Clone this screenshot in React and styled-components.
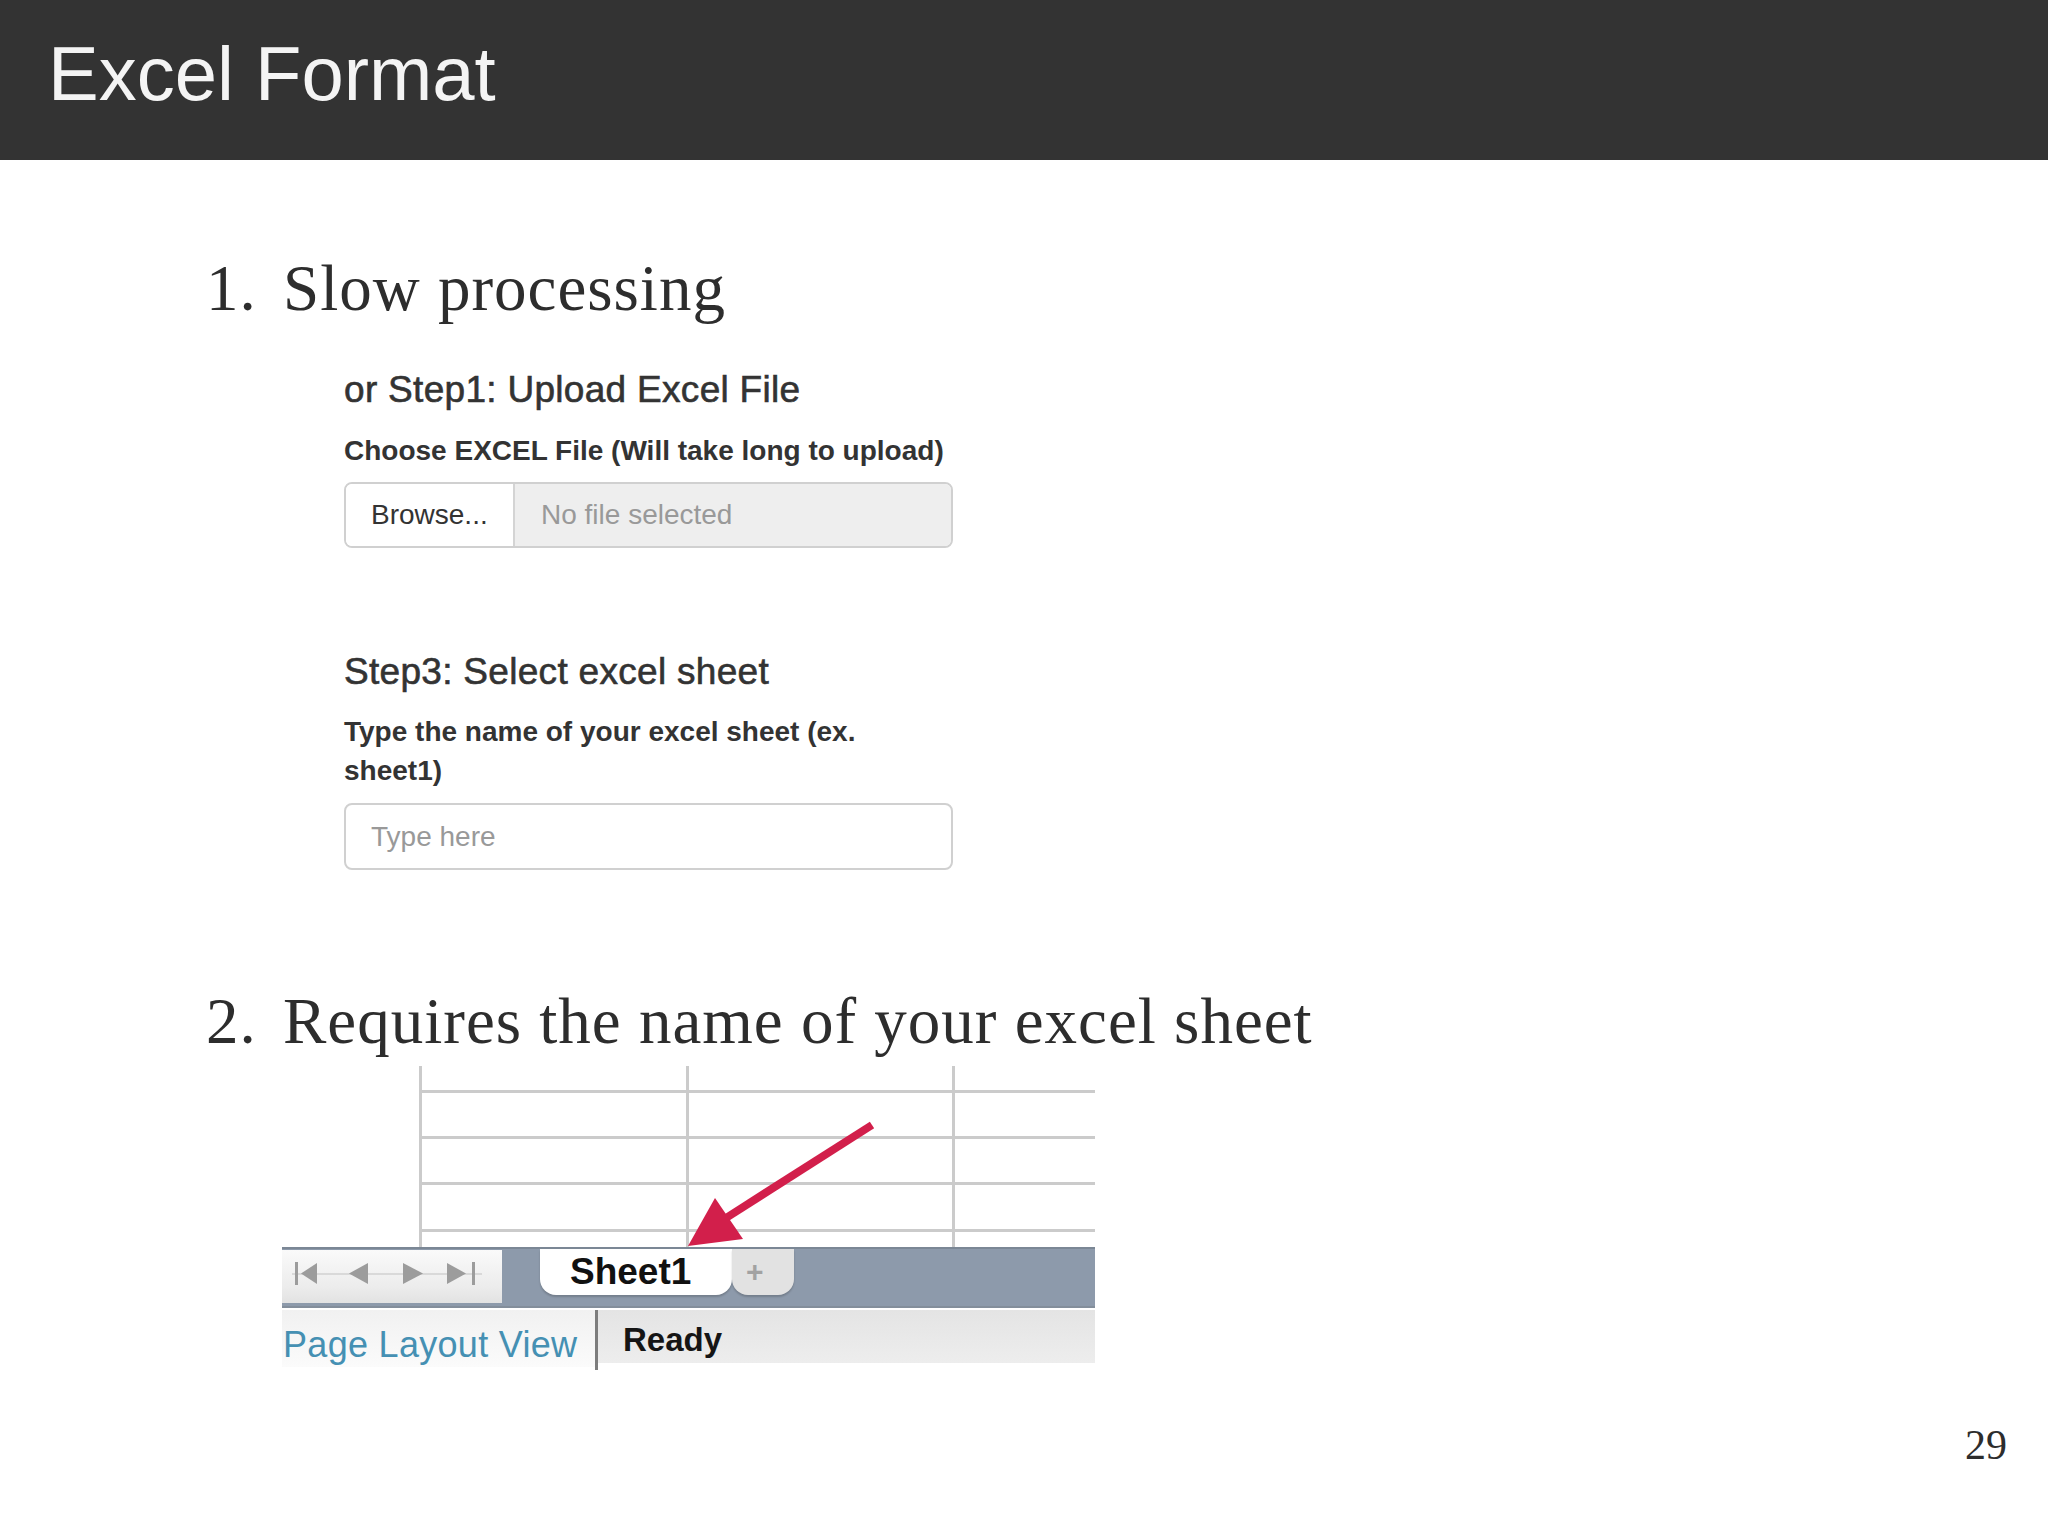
import styled, { createGlobalStyle } from "styled-components";

const GlobalStyle = createGlobalStyle`
  html, body {
    margin: 0;
    padding: 0;
    background: #ffffff;
  }
  * {
    box-sizing: border-box;
  }
`;

const Slide = styled.div`
  width: 2048px;
  height: 1536px;
  background: #ffffff;
  overflow: hidden;
`;

const Header = styled.header`
  height: 160px;
  background: #333333;
  padding: 36px 0 0 48px;
`;

const Title = styled.h1`
  margin: 0;
  font-family: "Liberation Sans", Arial, sans-serif;
  font-weight: 400;
  font-size: 76px;
  line-height: 76px;
  color: #f4f4f4;
`;

const Item = styled.div`
  display: flex;
  padding-left: 206px;
  margin-top: ${(p) => p.$top}px;
  font-family: "Liberation Serif", "Times New Roman", serif;
  font-size: 65px;
  line-height: 80px;
  letter-spacing: 1px;
  color: #2d2d2d;
`;

const ItemNumber = styled.span`
  width: 77px;
  flex: none;
`;

const FormPanel = styled.section`
  margin-left: 344px;
  width: 609px;
  font-family: "Liberation Sans", Arial, sans-serif;
  color: #333333;
`;

const StepHeading = styled.h4`
  margin: ${(p) => p.$top}px 0 0;
  font-size: 37px;
  line-height: 40px;
  letter-spacing: 0.3px;
  font-weight: 400;
  -webkit-text-stroke: 0.6px #333333;
`;

const FieldLabel = styled.label`
  display: block;
  margin-top: ${(p) => p.$top}px;
  font-size: 28px;
  line-height: 39px;
  font-weight: 700;
`;

const FileInput = styled.div`
  display: flex;
  margin-top: 12px;
  height: 66px;
  border: 2px solid #d0d0d0;
  border-radius: 8px;
  overflow: hidden;
  font-size: 28px;
`;

const BrowseButton = styled.div`
  display: flex;
  align-items: center;
  width: 169px;
  padding-left: 25px;
  background: #ffffff;
  border-right: 2px solid #d4d4d4;
  color: #333333;
`;

const FileName = styled.div`
  display: flex;
  align-items: center;
  flex: 1;
  padding-left: 26px;
  background: #eeeeee;
  color: #999999;
`;

const TextInput = styled.input`
  display: block;
  width: 100%;
  height: 67px;
  margin-top: 13px;
  padding: 0 0 0 25px;
  border: 2px solid #d0d0d0;
  border-radius: 8px;
  font-family: "Liberation Sans", Arial, sans-serif;
  font-size: 28px;
  color: #333333;
  background: #ffffff;
  outline: none;

  &::placeholder {
    color: #999999;
  }
`;

const ExcelShot = styled.figure`
  position: relative;
  margin: 5px 0 0 282px;
  width: 813px;
  font-family: "Liberation Sans", Arial, sans-serif;
`;

const Grid = styled.div`
  display: grid;
  grid-template-columns: 267px 266px 1fr;
  grid-template-rows: 27px 46px 46px 47px 15px;
  margin-left: 137px;
  height: 181px;
`;

const Cell = styled.div`
  border-left: 3px solid #cbcbcb;
  border-bottom: ${(p) => (p.$last ? "none" : "3px solid #cbcbcb")};
`;

const TabBar = styled.div`
  display: flex;
  align-items: flex-start;
  height: 61px;
  background: #8d9aab;
  border-top: 2px solid #7b8795;
  border-bottom: 2px solid #838e9b;
`;

const NavButtons = styled.div`
  width: 220px;
  height: 53px;
  margin-top: 1px;
  background: linear-gradient(#fafafa, #ececec 70%, #e2e2e2);
`;

const SheetTab = styled.div`
  width: ${(p) => p.$width}px;
  height: 46px;
  margin-left: ${(p) => p.$gap || 0}px;
  padding-left: ${(p) => p.$pad}px;
  background: ${(p) => (p.$active ? "#ffffff" : "#e2e2e2")};
  border-radius: 0 0 16px 16px;
  box-shadow: 0 2px 2px rgba(0, 0, 0, 0.18);
  font-size: ${(p) => (p.$active ? 37 : 30)}px;
  line-height: 46px;
  font-weight: 700;
  color: ${(p) => (p.$active ? "#111111" : "#a2a2a2")};
`;

const StatusBar = styled.div`
  display: flex;
  align-items: flex-start;
  margin-top: 2px;
  height: 60px;
`;

const StatusLeft = styled.div`
  width: 313px;
  height: 57px;
  padding-left: 1px;
  background: linear-gradient(#f1f1f1, #fbfbfb);
  font-size: 36px;
  letter-spacing: 0.3px;
  line-height: 70px;
  color: #4590b3;
  white-space: nowrap;
  overflow: hidden;
`;

const StatusDivider = styled.div`
  width: 3px;
  height: 60px;
  background: #7d7d7d;
`;

const StatusRight = styled.div`
  flex: 1;
  height: 53px;
  padding-left: 25px;
  background: linear-gradient(#e4e4e4, #ededed);
  font-size: 33px;
  font-weight: 700;
  line-height: 60px;
  color: #151515;
  overflow: hidden;
`;

const ArrowLayer = styled.svg`
  position: absolute;
  left: 0;
  top: 0;
  pointer-events: none;
`;

const Footer = styled.footer`
  display: flex;
  justify-content: flex-end;
  margin-top: 50px;
  padding-right: 41px;
  font-family: "Liberation Serif", "Times New Roman", serif;
  font-size: 42px;
  line-height: 50px;
  color: #2d2d2d;
`;

function NavIcons() {
  return (
    <svg width="220" height="53" viewBox="0 0 220 53">
      <line x1="10" y1="24" x2="200" y2="24" stroke="#d9d9d9" strokeWidth="2" />
      <g fill="#9c9c9c">
        <rect x="13" y="12" width="3" height="23" />
        <polygon points="35,13 35,34 19,23.5" />
        <polygon points="86,13 86,34 67,23.5" />
        <polygon points="121,13 121,34 141,23.5" />
        <polygon points="165,13 165,34 184,23.5" />
        <rect x="190" y="12" width="3" height="23" />
      </g>
    </svg>
  );
}

export default function App() {
  const rows = [0, 1, 2, 3, 4];
  const cols = [0, 1, 2];

  return (
    <Slide>
      <GlobalStyle />
      <Header>
        <Title>Excel Format</Title>
      </Header>

      <Item $top={88}>
        <ItemNumber>1.</ItemNumber>
        <span>Slow processing</span>
      </Item>

      <FormPanel>
        <StepHeading $top={42}>or Step1: Upload Excel File</StepHeading>
        <FieldLabel $top={21}>Choose EXCEL File (Will take long to upload)</FieldLabel>
        <FileInput>
          <BrowseButton>Browse...</BrowseButton>
          <FileName>No file selected</FileName>
        </FileInput>

        <StepHeading $top={104}>Step3: Select excel sheet</StepHeading>
        <FieldLabel $top={20}>
          Type the name of your excel sheet (ex. sheet1)
        </FieldLabel>
        <TextInput placeholder="Type here" />
      </FormPanel>

      <Item $top={111}>
        <ItemNumber>2.</ItemNumber>
        <span>Requires the name of your excel sheet</span>
      </Item>

      <ExcelShot>
        <Grid>
          {rows.map((r) =>
            cols.map((c) => <Cell key={`${r}-${c}`} $last={r === 4} />)
          )}
        </Grid>
        <TabBar>
          <NavButtons>
            <NavIcons />
          </NavButtons>
          <SheetTab $active $width={192} $gap={38} $pad={30}>
            Sheet1
          </SheetTab>
          <SheetTab $width={62} $pad={14}>
            +
          </SheetTab>
        </TabBar>
        <StatusBar>
          <StatusLeft>Page Layout View</StatusLeft>
          <StatusDivider />
          <StatusRight>Ready</StatusRight>
        </StatusBar>

        {/* red pointer drawn over the sheet tab */}
        <ArrowLayer width="813" height="181" viewBox="0 0 813 181">
          <line
            x1="590"
            y1="59"
            x2="444"
            y2="152"
            stroke="#d21f4b"
            strokeWidth="8"
          />
          <polygon points="406,180 433,132 461,173" fill="#d21f4b" />
        </ArrowLayer>
      </ExcelShot>

      <Footer>29</Footer>
    </Slide>
  );
}
